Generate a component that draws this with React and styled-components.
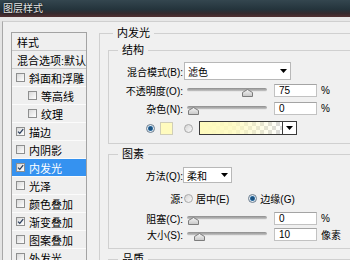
import React from "react";
import styled, { createGlobalStyle } from "styled-components";

const font = `"Liberation Sans", "Noto Sans CJK SC", sans-serif`;

const GlobalStyle = createGlobalStyle`
  html, body {
    margin: 0;
    padding: 0;
  }
  body {
    width: 350px;
    height: 260px;
    overflow: hidden;
    background: #f0f0f0;
    font-family: ${font};
    font-size: 11px;
    color: #000;
  }
`;

const Window = styled.div`
  width: 350px;
  height: 260px;
  display: flex;
  flex-direction: column;
  overflow: hidden;
`;

const TitleBar = styled.div`
  height: 17px;
  flex-shrink: 0;
  display: flex;
  align-items: center;
  padding-left: 3px;
  background: linear-gradient(180deg, #34464f 0%, #24343c 55%, #362a2e 80%, #523031 100%);
  border-bottom: 4px solid #e7e7e7;
`;

const Title = styled.span`
  font-size: 10px;
  line-height: 12px;
  color: #e4e4e4;
  text-shadow: 0 0 2px #000;
`;

const Frame = styled.div`
  flex: 1;
  min-height: 0;
  display: flex;
  padding-left: 2px;
  background: #e4e4e4;
`;

const Body = styled.div`
  flex: 1;
  min-width: 0;
  display: flex;
  background: #f0f0f0;
  border-left: 1px solid #a8a8a8;
  border-top: 1px solid #cfcfcf;
  overflow: hidden;
`;

const Sidebar = styled.div`
  width: 92px;
  flex-shrink: 0;
  box-sizing: border-box;
  padding: 10px 0 0 8px;
`;

const StyleList = styled.div`
  width: 76px;
  box-sizing: border-box;
  border: 1px solid #a3a3a3;
  border-bottom: none;
  background: #efefef;
  height: 100%;
`;

const ListRow = styled.div`
  height: 17px;
  display: flex;
  align-items: center;
  gap: 4px;
  padding-left: ${(p) => (p.$header ? 5 : p.$indent ? 16 : 4)}px;
  border-bottom: 1px solid ${(p) => (p.$header ? "#c9c9c9" : "#fbfbfb")};
  background: ${(p) => (p.$selected ? "#3592f0" : "transparent")};
  color: ${(p) => (p.$selected ? "#fff" : "#000")};
  white-space: nowrap;
  overflow: hidden;
`;

const CheckBox = styled.span`
  width: 9px;
  height: 9px;
  flex-shrink: 0;
  box-sizing: border-box;
  border: 1px solid #8e8f8f;
  background: linear-gradient(135deg, #d8d8d8, #ffffff);
  display: flex;
  align-items: center;
  justify-content: center;
`;

const Main = styled.div`
  flex: 1;
  min-width: 0;
  padding: 5px 0 0 4px;
`;

const Group = styled.fieldset`
  margin: ${(p) => p.$mt || 0}px 0 0 0;
  padding: 0;
  min-width: 0;
  border: 1px solid #d0d0d0;
  width: ${(p) => (p.$width ? `${p.$width}px` : "auto")};
  box-sizing: border-box;
`;

const Legend = styled.legend`
  margin-left: ${(p) => p.$indent}px;
  padding: 0 4px;
  font-size: 11px;
  line-height: 12px;
`;

const GroupBody = styled.div`
  padding: ${(p) => p.$pad};
  font-size: 10px;
`;

const FieldRow = styled.div`
  display: flex;
  align-items: center;
  height: ${(p) => p.$h || 18}px;
  margin-top: ${(p) => p.$mt || 0}px;
  padding-left: ${(p) => p.$pl || 0}px;
  white-space: nowrap;
`;

const Label = styled.span`
  width: 74px;
  flex-shrink: 0;
  text-align: right;
`;

const Select = styled.div`
  width: ${(p) => p.$w}px;
  height: ${(p) => p.$h}px;
  margin-left: ${(p) => p.$ml || 0}px;
  box-sizing: border-box;
  border: 1px solid #b8b8b8;
  background: #fff;
  display: flex;
  align-items: center;
  justify-content: space-between;
  padding: 0 3px;
`;

const Slider = styled.div`
  position: relative;
  width: 86px;
  height: 18px;
  flex-shrink: 0;
  margin-left: 1px;
  box-sizing: border-box;
  padding: 7px 3px 0;
`;

const Track = styled.div`
  height: 3px;
  border-radius: 2px;
  background: linear-gradient(180deg, #8c8c8c, #c4c4c4);
  border-bottom: 1px solid #e6e6e6;
`;

const Thumb = styled.svg`
  position: absolute;
  top: 8px;
  width: 11px;
  height: 8px;
`;

const NumberBox = styled.div`
  width: 43px;
  height: 13px;
  margin-left: 4px;
  box-sizing: border-box;
  border: 1px solid #c2c2c2;
  border-top-color: #a4a4a4;
  background: #fff;
  line-height: 11px;
  padding-left: 4px;
`;

const Unit = styled.span`
  margin-left: 4px;
`;

const Radio = styled.span`
  width: 9px;
  height: 9px;
  flex-shrink: 0;
  margin-left: ${(p) => p.$ml || 0}px;
  box-sizing: border-box;
  border-radius: 50%;
  border: 1px solid ${(p) => (p.$on ? "#6d7f90" : "#a9a9a9")};
  background: ${(p) =>
    p.$on
      ? "radial-gradient(circle, #1d527f 0 1.8px, #5f9ccc 2.4px, #e4eaf0 3px)"
      : "linear-gradient(135deg, #d4d4d4, #fafafa)"};
`;

const RadioText = styled.span`
  margin-left: 3px;
`;

const Swatch = styled.div`
  width: 13px;
  height: 13px;
  margin-left: 5px;
  box-sizing: border-box;
  border: 1px solid #d0ceb8;
  background: #fffbbe;
`;

const GradientBar = styled.div`
  display: flex;
  width: 98px;
  height: 14px;
  margin-left: 6px;
  box-sizing: border-box;
  border: 1px solid #3a3a3a;
`;

const GradientFill = styled.div`
  flex: 1;
  background: linear-gradient(
      90deg,
      #fffbbd 0%,
      rgba(255, 251, 189, 0.85) 40%,
      rgba(255, 251, 189, 0) 100%
    ),
    repeating-conic-gradient(#dadada 0 25%, #ffffff 0 50%) 0 0 / 8px 8px;
`;

const GradientArrow = styled.div`
  width: 13px;
  border-left: 1px solid #3a3a3a;
  background: #fff;
  display: flex;
  align-items: center;
  justify-content: center;
`;

const layers = [
  { name: "斜面和浮雕" },
  { name: "等高线", indent: true },
  { name: "纹理", indent: true },
  { name: "描边", checked: true },
  { name: "内阴影" },
  { name: "内发光", checked: true, selected: true },
  { name: "光泽" },
  { name: "颜色叠加" },
  { name: "渐变叠加", checked: true },
  { name: "图案叠加" },
  { name: "外发光" },
  { name: "投影" },
];

const Arrow = () => (
  <svg width="7" height="4" viewBox="0 0 7 4">
    <polygon points="0,0 7,0 3.5,4" fill="#000" />
  </svg>
);

const Tick = () => (
  <svg width="7" height="7" viewBox="0 0 7 7">
    <path d="M1 3.6 L2.8 5.4 L6.2 1.2" fill="none" stroke="#2c3f5e" strokeWidth="1.3" />
  </svg>
);

const SliderControl = ({ pos }) => (
  <Slider>
    <Track />
    <Thumb viewBox="0 0 11 8" style={{ left: 4 + pos * 72 }}>
      <defs>
        <linearGradient id="thumbFill" x1="0" y1="0" x2="0" y2="1">
          <stop offset="0" stopColor="#f6f6f6" />
          <stop offset="1" stopColor="#c6c6c6" />
        </linearGradient>
      </defs>
      <polygon
        points="0.5,3.5 5.5,0.5 10.5,3.5 10.5,7.5 0.5,7.5"
        fill="url(#thumbFill)"
        stroke="#7c7c7c"
      />
    </Thumb>
  </Slider>
);

const SliderRow = ({ label, pos, value, unit, h, mt }) => (
  <FieldRow $h={h} $mt={mt}>
    <Label>{label}</Label>
    <SliderControl pos={pos} />
    <NumberBox>{value}</NumberBox>
    <Unit>{unit}</Unit>
  </FieldRow>
);

export default function App() {
  return (
    <>
      <GlobalStyle />
      <Window>
        <TitleBar>
          <Title>图层样式</Title>
        </TitleBar>
        <Frame>
          <Body>
            <Sidebar>
              <StyleList>
                <ListRow $header>样式</ListRow>
                <ListRow $header>混合选项:默认</ListRow>
                {layers.map((l) => (
                  <ListRow key={l.name} $indent={l.indent} $selected={l.selected}>
                    <CheckBox>{l.checked && <Tick />}</CheckBox>
                    {l.name}
                  </ListRow>
                ))}
              </StyleList>
            </Sidebar>
            <Main>
              <Group $width={300}>
                <Legend $indent={13}>内发光</Legend>
                <GroupBody $pad="5px 8px 0 8px">
                  <Group>
                    <Legend $indent={9}>结构</Legend>
                    <GroupBody $pad="6px 0 6px 0">
                      <FieldRow>
                        <Label>混合模式(B):</Label>
                        <Select $w={107} $h={18} $ml={1}>
                          <span>滤色</span>
                          <Arrow />
                        </Select>
                      </FieldRow>
                      <SliderRow label="不透明度(O):" pos={0.75} value="75" unit="%" mt={1} />
                      <SliderRow label="杂色(N):" pos={0} value="0" unit="%" />
                      <FieldRow $mt={2} $pl={37}>
                        <Radio $on />
                        <Swatch />
                        <Radio $ml={11} />
                        <GradientBar>
                          <GradientFill />
                          <GradientArrow>
                            <Arrow />
                          </GradientArrow>
                        </GradientBar>
                      </FieldRow>
                    </GroupBody>
                  </Group>
                  <Group $mt={4}>
                    <Legend $indent={9}>图素</Legend>
                    <GroupBody $pad="7px 0 6px 0">
                      <FieldRow $h={16}>
                        <Label>方法(Q):</Label>
                        <Select $w={49} $h={16}>
                          <span>柔和</span>
                          <Arrow />
                        </Select>
                      </FieldRow>
                      <FieldRow $mt={6}>
                        <Label>源:</Label>
                        <Radio $ml={1} />
                        <RadioText>居中(E)</RadioText>
                        <Radio $on $ml={19} />
                        <RadioText>边缘(G)</RadioText>
                      </FieldRow>
                      <SliderRow label="阻塞(C):" pos={0} value="0" unit="%" h={16} mt={3} />
                      <SliderRow label="大小(S):" pos={0.08} value="10" unit="像素" h={16} />
                    </GroupBody>
                  </Group>
                  <Group $mt={4}>
                    <Legend $indent={9}>品质</Legend>
                    <GroupBody $pad="30px 0 0 0" />
                  </Group>
                </GroupBody>
              </Group>
            </Main>
          </Body>
        </Frame>
      </Window>
    </>
  );
}
